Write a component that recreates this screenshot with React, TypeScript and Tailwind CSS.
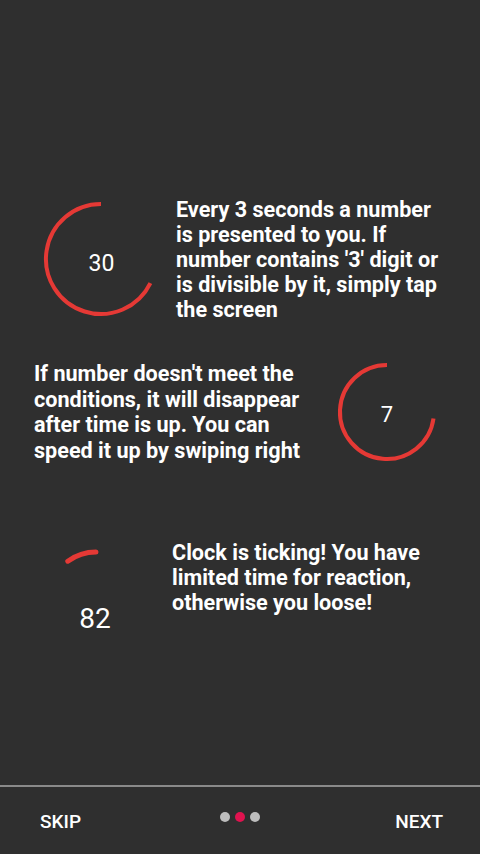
import React from 'react';

const RED = '#e53935';

// Arc drawn from the top of the circle, counterclockwise, like a countdown ring
const Ring: React.FC<{ size: number; d: string; width: number; round?: boolean; label: string; labelClass: string }> = ({
  size,
  d,
  width,
  round,
  label,
  labelClass
}) => {
  return <div className="relative shrink-0" style={{ width: size, height: size }}>
      <svg width={size} height={size} viewBox={`0 0 ${size} ${size}`} className="block">
        <path d={d} fill="none" stroke={RED} strokeWidth={width} strokeLinecap={round ? 'round' : 'butt'} />
      </svg>
      <div className={`absolute text-white ${labelClass}`}>{label}</div>
    </div>;
};

const Lines: React.FC<{ lines: string[]; className: string }> = ({ lines, className }) => {
  return <p className={`whitespace-nowrap text-[21.6px] font-bold ${className}`}>
      {lines.map((l, i) => <span key={i} className="block">{l}</span>)}
    </p>;
};

export default function App() {
  return <div className="flex h-[854px] w-[480px] flex-col overflow-hidden bg-[#2f2f2f] text-white" style={{ fontFamily: 'Roboto, "Liberation Sans", sans-serif' }}>
      <div className="flex flex-1 flex-col">
        {/* Rule 1 */}
        <div className="mt-[198px] flex h-[122px] items-center">
          <div className="ml-[41px]">
            <Ring size={120} width={4} d="M60 5 A55 55 0 1 0 109.4 84.1" label="30" labelClass="inset-0 flex items-center justify-center pt-[8px] pl-[1px] text-[23px] leading-none" />
          </div>
          <Lines className="ml-[15px] leading-[25px]" lines={['Every 3 seconds a number', 'is presented to you. If', "number contains '3' digit or", 'is divisible by it, simply tap', 'the screen']} />
        </div>

        {/* Rule 2 */}
        <div className="mt-[42px] flex h-[100px] items-center">
          <div className="ml-[34px] w-[301px]">
            <Lines className="leading-[25.5px]" lines={["If number doesn't meet the", 'conditions, it will disappear', 'after time is up. You can', 'speed it up by swiping right']} />
          </div>
          <Ring size={104} width={4} d="M52 5 A47 47 0 1 0 98.5 58.5" label="7" labelClass="inset-0 flex items-center justify-center pt-[5px] text-[22px] leading-none" />
        </div>

        {/* Rule 3 */}
        <div className="mt-[78px] flex items-start">
          <div className="ml-[41px] mt-[5px]">
            <Ring size={110} width={5} round d="M55 7 A48 48 0 0 0 26.8 16.2" label="82" labelClass="left-0 right-0 top-[60px] text-center pr-[2px] text-[28px] leading-none" />
          </div>
          <Lines className="ml-[21px] leading-[25px]" lines={['Clock is ticking! You have', 'limited time for reaction,', 'otherwise you loose!']} />
        </div>
      </div>

      {/* Footer */}
      <div className="flex h-[69px] items-center justify-between border-t-2 border-[#8a8a8a] px-[37px] pb-[2px]">
        <button className="w-[60px] pl-[3px] pt-[6px] text-left text-[19px] font-medium text-white">SKIP</button>
        <div className="flex items-center gap-[5px] pb-[6px]">
          <span className="h-[10px] w-[10px] rounded-full bg-[#bdbdbd]" />
          <span className="h-[10px] w-[10px] rounded-full bg-[#e0134f]" />
          <span className="h-[10px] w-[10px] rounded-full bg-[#bdbdbd]" />
        </div>
        <button className="w-[60px] pt-[6px] text-right text-[19px] font-medium text-white">NEXT</button>
      </div>
    </div>;
}
